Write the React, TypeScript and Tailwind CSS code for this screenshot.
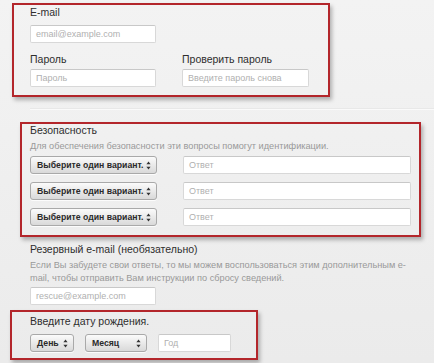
import React from "react";

const SelectArrows = () => (
    <svg width="5" height="9" viewBox="0 0 5 9" className="shrink-0">
        <path d="M2.5 0.5 L4.6 3.3 L0.4 3.3 Z" fill="#333" />
        <path d="M2.5 8.5 L4.6 5.7 L0.4 5.7 Z" fill="#333" />
    </svg>
);

function FakeSelect({ label, width }: { label: string; width: string }) {
    return (
        <div
            className={`${width} h-[18px] flex items-center justify-between pl-[6px] pr-[5px] rounded-[3px] border border-[#a9a9a9] bg-gradient-to-b from-[#fbfbfb] to-[#d9d9d9] shadow-[0_1px_0_rgba(255,255,255,0.8)]`}>
            <span className="text-[8.7px] font-bold text-[#2a2a2a] leading-none">
                {label}
            </span>
            <SelectArrows />
        </div>
    );
}

function TextField({ placeholder, width }: { placeholder: string; width: string }) {
    return (
        <div
            className={`${width} h-[18px] flex items-center px-[5px] bg-white border border-[#d8d8d8] border-t-[#c8c8c8] rounded-[2px]`}>
            <span className="text-[9px] text-[#b0b0b0] leading-none">
                {placeholder}
            </span>
        </div>
    );
}

// red annotation frames drawn on top of the form
function Frame({ className }: { className: string }) {
    return (
        <div
            className={`absolute border-2 border-[#b3262b] shadow-[2px_3px_4px_rgba(0,0,0,0.28)] ${className}`}
        />
    );
}

export default function App() {
    return (
        <div
            className="relative w-[434px] h-[363px] overflow-hidden bg-gradient-to-b from-[#f3f3f3] to-[#ebebeb] text-[#2e2e2e]"
            style={{ fontFamily: '"Liberation Sans", Arial, sans-serif' }}>
            <div className="pl-[30px] pt-[6px]">
                {/* Account */}
                <p className="text-[10.5px] leading-[13px]">E-mail</p>
                <div className="mt-[6px]">
                    <TextField placeholder="email@example.com" width="w-[126px]" />
                </div>

                <div className="mt-[10px] flex gap-[26px]">
                    <div>
                        <p className="text-[10.5px] leading-[13px]">Пароль</p>
                        <div className="mt-[3px]">
                            <TextField placeholder="Пароль" width="w-[126px]" />
                        </div>
                    </div>
                    <div>
                        <p className="text-[10.5px] leading-[13px]">Проверить пароль</p>
                        <div className="mt-[3px]">
                            <TextField
                                placeholder="Введите пароль снова"
                                width="w-[127px]"
                            />
                        </div>
                    </div>
                </div>

                <div className="mt-[21px] h-px w-[404px] bg-[#e8e8e8] shadow-[0_1px_0_#fafafa]" />

                {/* Security */}
                <p className="mt-[15px] text-[10.5px] leading-[13px]">Безопасность</p>
                <p className="mt-[3px] text-[9.2px] leading-[12px] text-[#999]">
                    Для обеспечения безопасности эти вопросы помогут идентификации.
                </p>
                <div className="mt-[4px] flex flex-col gap-[8px]">
                    {[0, 1, 2].map((i) => (
                        <div key={i} className="flex gap-[26px]">
                            <FakeSelect
                                label="Выберите один вариант."
                                width="w-[127px]"
                            />
                            <TextField placeholder="Ответ" width="w-[228px]" />
                        </div>
                    ))}
                </div>

                {/* Backup e-mail */}
                <p className="mt-[17px] text-[10.5px] leading-[13px]">
                    Резервный e-mail (необязательно)
                </p>
                <p className="mt-[3px] w-[392px] text-[9.2px] leading-[12.5px] text-[#999]">
                    Если Вы забудете свои ответы, то мы можем воспользоваться
                    этим дополнительным e-mail, чтобы отправить Вам инструкции
                    по сбросу сведений.
                </p>
                <div className="mt-[3px]">
                    <TextField placeholder="rescue@example.com" width="w-[126px]" />
                </div>

                {/* Birth date */}
                <p className="mt-[10px] text-[10.5px] leading-[13px]">
                    Введите дату рождения.
                </p>
                <div className="mt-[6px] flex gap-[11px]">
                    <FakeSelect label="День" width="w-[44px]" />
                    <FakeSelect label="Месяц" width="w-[62px]" />
                    <TextField placeholder="Год" width="w-[73px]" />
                </div>
            </div>

            <Frame className="left-[12px] top-[3px] w-[318px] h-[94px]" />
            <Frame className="left-[20px] top-[122px] w-[401px] h-[115px]" />
            <Frame className="left-[10px] top-[310px] w-[248px] h-[50px]" />
        </div>
    );
}
